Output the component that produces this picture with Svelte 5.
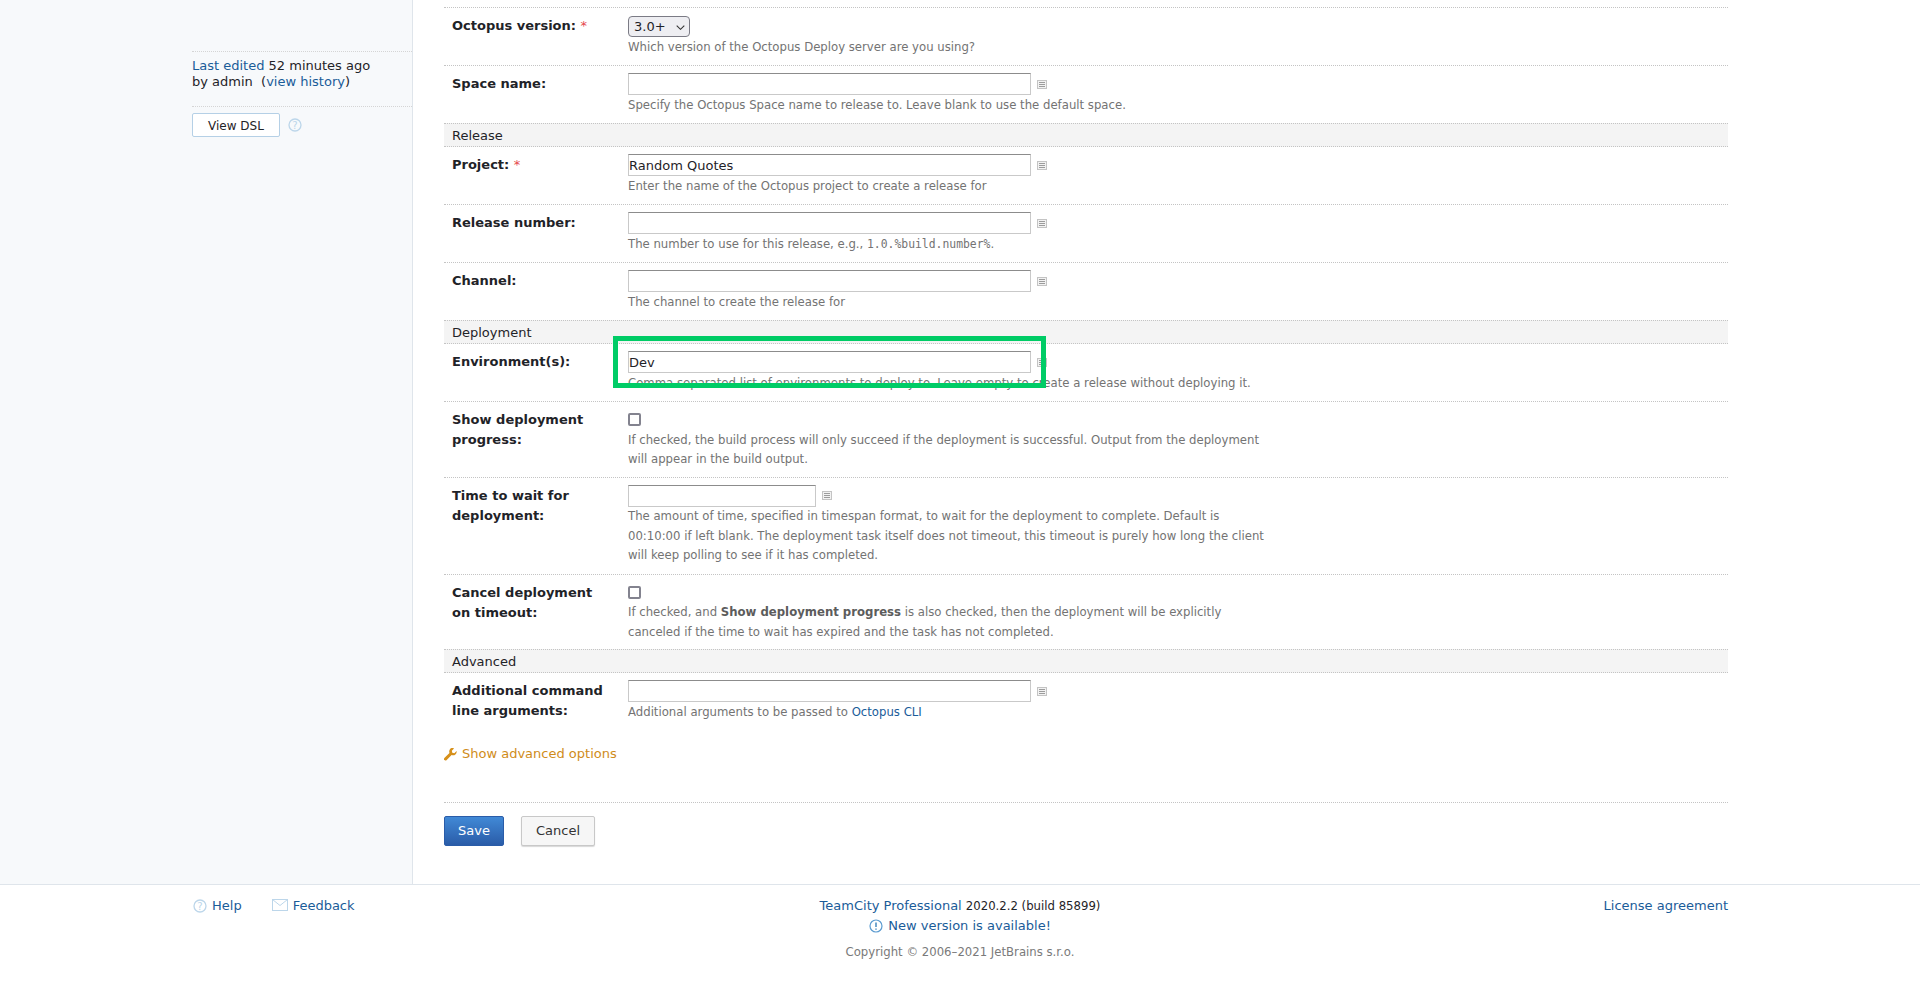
<script lang="ts">
  // static form, nothing to compute
</script>

{#snippet varIcon()}
  <svg class="var-icon" width="10" height="9" viewBox="0 0 10 9" aria-hidden="true">
    <rect x="0.5" y="0.5" width="9" height="8" fill="#f2f2f2" stroke="#c4c4c4" />
    <path d="M2 2.500h6M2 4.500h6M2 6.500h6" stroke="#9c9c9c" stroke-width="1" />
  </svg>
{/snippet}

{#snippet textInput(value = '')}
  <div class="input-line">
    <input type="text" {value} />
    {@render varIcon()}
  </div>
{/snippet}

{#snippet helpIcon()}
  <svg width="14" height="14" viewBox="0 0 14 14" aria-hidden="true">
    <circle cx="7" cy="7" r="6" fill="none" stroke="#bcd6ea" stroke-width="1.3" />
    <text x="7" y="10.5" text-anchor="middle" class="q">?</text>
  </svg>
{/snippet}

<div class="page">
  <aside class="sidebar">
    <div class="edited">
      <a href="#edit">Last edited</a> 52 minutes ago<br />
      by admin &nbsp;(<a href="#history">view history</a>)
    </div>
    <div class="dsl">
      <button class="dsl-btn">View DSL</button>
      {@render helpIcon()}
    </div>
  </aside>

  <main class="content">
    <div class="row">
      <div class="label">Octopus version: <span class="req">*</span></div>
      <div class="field">
        <select class="version"><option>3.0+</option></select>
        <p class="note">Which version of the Octopus Deploy server are you using?</p>
      </div>
    </div>
    <div class="row">
      <div class="label">Space name:</div>
      <div class="field">
        {@render textInput()}
        <p class="note">Specify the Octopus Space name to release to. Leave blank to use the default space.</p>
      </div>
    </div>

    <div class="group">Release</div>
    <div class="row">
      <div class="label">Project: <span class="req">*</span></div>
      <div class="field">
        {@render textInput('Random Quotes')}
        <p class="note">Enter the name of the Octopus project to create a release for</p>
      </div>
    </div>
    <div class="row">
      <div class="label">Release number:</div>
      <div class="field">
        {@render textInput()}
        <p class="note">The number to use for this release, e.g., <code>1.0.%build.number%</code>.</p>
      </div>
    </div>
    <div class="row">
      <div class="label">Channel:</div>
      <div class="field">
        {@render textInput()}
        <p class="note">The channel to create the release for</p>
      </div>
    </div>

    <div class="group">Deployment</div>
    <div class="row">
      <div class="label">Environment(s):</div>
      <div class="field">
        {@render textInput('Dev')}
        <p class="note">Comma separated list of environments to deploy to. Leave empty to create a release without deploying it.</p>
      </div>
      <div class="highlight"></div>
    </div>
    <div class="row">
      <div class="label">Show deployment progress:</div>
      <div class="field">
        <input class="check" type="checkbox" />
        <p class="note">If checked, the build process will only succeed if the deployment is successful. Output from the deployment will appear in the build output.</p>
      </div>
    </div>
    <div class="row">
      <div class="label">Time to wait for deployment:</div>
      <div class="field">
        <div class="input-line short">
          <input type="text" />
          {@render varIcon()}
        </div>
        <p class="note">The amount of time, specified in timespan format, to wait for the deployment to complete. Default is 00:10:00 if left blank. The deployment task itself does not timeout, this timeout is purely how long the client will keep polling to see if it has completed.</p>
      </div>
    </div>
    <div class="row">
      <div class="label">Cancel deployment on timeout:</div>
      <div class="field">
        <input class="check" type="checkbox" />
        <p class="note">If checked, and <b>Show deployment progress</b> is also checked, then the deployment will be explicitly canceled if the time to wait has expired and the task has not completed.</p>
      </div>
    </div>

    <div class="group">Advanced</div>
    <div class="row last">
      <div class="label">Additional command line arguments:</div>
      <div class="field">
        {@render textInput()}
        <p class="note">Additional arguments to be passed to <a href="#cli">Octopus CLI</a></p>
      </div>
    </div>

    <a class="advanced" href="#advanced">
      <svg width="13" height="13" viewBox="0 0 13 13" aria-hidden="true">
        <path d="M12.6 3.1 10.3 5.3 8.3 4.8 7.8 2.7 10 .4C8.4-.2 6.6.2 5.8 1.4 5.1 2.5 5 3.700 5.5 4.900L.6 9.800c-.8.8-.8 1.700-.2 2.300.6.6 1.600.6 2.300-.1L7.600 7c1.300.6 2.700.4 3.800-.5 1-1 1.500-2.200 1.200-3.400Z" fill="#d6901a" />
      </svg>
      Show advanced options
    </a>

    <div class="actions">
      <button class="save">Save</button>
      <button class="cancel">Cancel</button>
    </div>
  </main>
</div>

<footer class="footer">
  <div class="foot-left">
    <a href="#help" class="foot-link">
      {@render helpIcon()}
      Help
    </a>
    <a href="#feedback" class="foot-link">
      <svg width="16" height="12" viewBox="0 0 16 12" aria-hidden="true">
        <rect x="0.5" y="0.5" width="15" height="11" fill="none" stroke="#bcd6ea" />
        <path d="M.5.5 8 6.5 15.5.5" fill="none" stroke="#bcd6ea" />
      </svg>
      Feedback
    </a>
  </div>
  <div class="foot-center">
    <div><a href="#tc">TeamCity Professional</a> <span class="build">2020.2.2 (build 85899)</span></div>
    <div class="new-version">
      <a href="#new">
        <svg width="14" height="14" viewBox="0 0 14 14" aria-hidden="true">
          <circle cx="7" cy="7" r="6" fill="none" stroke="#5b9bd0" stroke-width="1.2" />
          <path d="M7 3.5v4.500M7 9.500v1.200" stroke="#2a78b5" stroke-width="1.3" />
        </svg>
        New version is available!
      </a>
    </div>
    <div class="copyright">Copyright © 2006–2021 JetBrains s.r.o.</div>
  </div>
  <div class="foot-right"><a href="#license">License agreement</a></div>
</footer>

<style>
  :global(body) {
    margin: 0;
    font-family: "DejaVu Sans", sans-serif;
    font-size: 13px;
    line-height: 16px;
    color: #1f2328;
    background: #fff;
  }

  a {
    color: #1a5c99;
    text-decoration: none;
  }

  .page {
    display: flex;
    height: 884px;
    border-bottom: 1px solid #dfe5eb;
  }

  .sidebar {
    box-sizing: border-box;
    width: 413px;
    flex: none;
    padding: 51px 0 0 192px;
    background: #f7f9fb;
    border-right: 1px solid #dfe5eb;
  }

  .edited {
    border-top: 1px dotted #d5d5d5;
    border-bottom: 1px dotted #d5d5d5;
    padding: 6px 0 16px;
  }

  .dsl {
    display: flex;
    align-items: center;
    gap: 8px;
    padding-top: 6px;
  }

  .dsl-btn {
    width: 88px;
    height: 24px;
    padding: 1px 0 0;
    font: inherit;
    font-size: 12px;
    color: #1f2328;
    background: #fff;
    border: 1px solid #b5d0e6;
    border-radius: 2px;
  }

  .q {
    font-family: "DejaVu Sans", sans-serif;
    font-size: 10px;
    fill: #bcd6ea;
  }

  .content {
    box-sizing: border-box;
    width: 1284px;
    margin-left: 31px;
    padding-top: 7px;
  }

  .row {
    position: relative;
    display: flex;
    border-top: 1px dotted #c4c4c4;
    padding: 7px 0 8px 8px;
  }

  .row.last {
    padding-bottom: 0;
  }

  .label {
    box-sizing: border-box;
    width: 176px;
    flex: none;
    padding: 1px 16px 0 0;
    font-weight: 700;
    line-height: 20px;
  }

  .req {
    color: #e5484d;
    font-weight: 400;
  }

  .field {
    width: 640px;
  }

  .group {
    box-sizing: border-box;
    height: 24px;
    padding: 3px 8px 0;
    line-height: 17px;
    background: #f4f4f4;
    border-top: 1px dotted #c4c4c4;
    border-bottom: 1px dotted #c4c4c4;
    margin-bottom: -1px;
  }

  .group + .row {
    border-top-color: transparent;
  }

  .input-line {
    display: flex;
    align-items: center;
    gap: 6px;
    height: 22px;
  }

  .input-line input {
    box-sizing: border-box;
    width: 403px;
    height: 22px;
    padding: 0;
    font: inherit;
    color: #1f2328;
    background: #fff;
    border-style: solid;
    border-width: 1px;
    border-color: #8c8c8c #c9c9c9 #c9c9c9 #c9c9c9;
    border-radius: 0;
    outline: none;
  }

  .input-line.short input {
    width: 188px;
  }

  .var-icon {
    flex: none;
  }

  .version {
    display: block;
    width: 62px;
    height: 21px;
    margin: 1px 0 0;
    padding: 0 0 0 5px;
    font: inherit;
    color: #1f2328;
    appearance: none;
    background: #eeeef2 url("data:image/svg+xml,%3Csvg xmlns='http://www.w3.org/2000/svg' width='9' height='5'%3E%3Cpath d='M.7.7 4.500 4.300 8.300.7' fill='none' stroke='%23333' stroke-width='1.100'/%3E%3C/svg%3E") no-repeat 47px 8px;
    border: 1px solid #7b7b85;
    border-radius: 4px;
  }

  .check {
    display: block;
    box-sizing: border-box;
    width: 13px;
    height: 13px;
    margin: 4px 0;
    appearance: none;
    background: #fff;
    border: 2px solid #83838f;
    border-radius: 2px;
  }

  .note {
    margin: 0;
    padding-top: 0.5px;
    font-size: 11.7px;
    line-height: 19.5px;
    color: #737373;
  }

  .check + .note {
    margin-bottom: -1px;
  }

  .note b {
    color: #5c5c5c;
  }

  .note code {
    font-family: "DejaVu Sans Mono", monospace;
    font-size: 11.4px;
  }

  .highlight {
    position: absolute;
    left: 169px;
    top: -8px;
    width: 433px;
    height: 52px;
    box-sizing: border-box;
    border: 5px solid #00cc66;
    pointer-events: none;
  }

  .advanced {
    display: flex;
    align-items: center;
    gap: 5px;
    margin-top: 24px;
    color: #d08c1a;
  }

  .actions {
    display: flex;
    gap: 17px;
    margin-top: 39.5px;
    padding-top: 13px;
    border-top: 1px dotted #c4c4c4;
  }

  .actions button {
    height: 30px;
    padding: 0;
    font: inherit;
    border-radius: 2px;
  }

  .save {
    width: 60px;
    color: #fff;
    background: linear-gradient(#4189d6, #2a5ca8);
    border: 1px solid #2a5ca8;
  }

  .cancel {
    width: 74px;
    color: #333;
    background: #f6f6f6;
    border: 1px solid #c8c8c8;
    box-shadow: 0 1px 1px #d8d8d8;
  }

  .footer {
    position: relative;
    display: flex;
    justify-content: space-between;
    padding: 13px 192px 0 193px;
    height: 97px;
  }

  .foot-left {
    display: flex;
    gap: 30px;
  }

  .foot-link {
    display: flex;
    align-items: flex-start;
    gap: 5px;
  }

  .foot-link svg {
    margin-top: 1px;
  }

  .foot-center {
    position: absolute;
    left: 0;
    right: 0;
    text-align: center;
  }

  .build {
    font-size: 11.7px;
  }

  .new-version {
    margin-top: 4px;
  }

  .new-version svg {
    vertical-align: -3px;
    margin-right: 1px;
  }

  .copyright {
    margin-top: 10px;
    font-size: 11.7px;
    color: #7a7a7a;
  }
</style>
